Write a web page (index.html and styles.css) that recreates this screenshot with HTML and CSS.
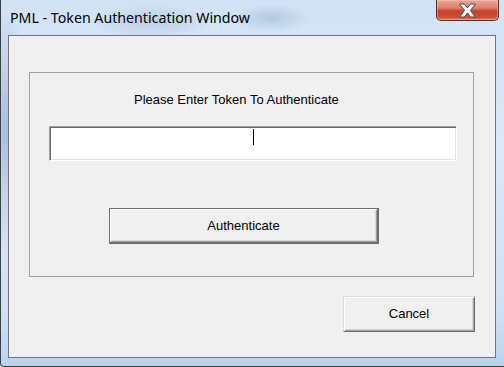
FILE: index.html
```html
<!DOCTYPE html>
<html lang="en">
<head>
    <meta charset="UTF-8">
    <title>PML - Token Authentication Window</title>
    <link rel="stylesheet" href="styles.css">
</head>
<body>
    <div class="window">
        <div class="titlebar">
            <span class="title">PML - Token Authentication Window</span>
            <div class="close-btn">
                <svg width="19" height="15" viewBox="0 0 19 15">
                    <path d="M1.5 1 H6.5 L9.5 5 L12.5 1 H17.5 L12.5 7.5 L17.5 14 H12.5 L9.5 10 L6.5 14 H1.5 L6.5 7.5 Z" fill="#fff" stroke="#404448" stroke-width="1" stroke-linejoin="round"/>
                </svg>
            </div>
        </div>
        <div class="client">
            <div class="group">
                <p class="prompt">Please Enter Token To Authenticate</p>
                <div class="token-box"><span class="caret"></span></div>
                <button class="btn auth-btn">Authenticate</button>
            </div>
            <button class="btn cancel-btn">Cancel</button>
        </div>
    </div>
</body>
</html>
```

FILE: styles.css
```css
body {
    margin: 0;
    background: #fff;
    font-family: "Liberation Sans", Arial, sans-serif;
}
.window {
    width: 504px;
    height: 367px;
    box-sizing: border-box;
    display: flex;
    flex-direction: column;
    padding: 0 8px 8px 7px;
    border-left: 1px solid #3c4148;
    border-bottom: 1px solid #3c4148;
    border-bottom-left-radius: 4px;
    background:
        radial-gradient(ellipse 60px 18px at 150px 22px, rgba(160, 185, 215, 0.45), transparent),
        radial-gradient(ellipse 40px 14px at 270px 18px, rgba(150, 175, 205, 0.5), transparent),
        radial-gradient(ellipse 30px 120px at 4px 130px, rgba(120, 150, 185, 0.5), transparent),
        linear-gradient(to bottom, #d2e2f4 0%, #dbe9f8 40%, #cfe1f4 85%, #b9d3ee 100%);
}
.titlebar {
    height: 35px;
    display: flex;
    justify-content: space-between;
    align-items: flex-start;
}
.title {
    font-family: "Noto Sans", sans-serif;
    font-size: 14.2px;
    color: #000;
    margin: 8px 0 0 2px;
}
.close-btn {
    width: 63px;
    height: 21px;
    margin-right: -3px;
    box-sizing: border-box;
    border: 1px solid #5a2b25;
    border-top: none;
    border-radius: 0 0 5px 5px;
    display: flex;
    align-items: center;
    justify-content: center;
    background: linear-gradient(to bottom, #e9a797 0%, #d9806b 40%, #c4412a 55%, #cd4e33 85%, #e07a58 100%);
    box-shadow: inset 0 0 0 1px rgba(255, 210, 200, 0.45);
}
.close-btn svg {
    display: block;
}
.client {
    flex: 1;
    border: 1px solid #6b7580;
    background: #f0f0f0;
    display: flex;
    flex-direction: column;
    font-size: 13px;
    color: #000;
}
.group {
    width: 445px;
    height: 205px;
    box-sizing: border-box;
    margin: 36px 0 0 20px;
    border: 1px solid #a0a0a0;
    display: flex;
    flex-direction: column;
    align-items: flex-start;
}
.prompt {
    margin: 20px 0 0 104px;
    line-height: 14px;
}
.token-box {
    width: 408px;
    height: 35px;
    box-sizing: border-box;
    margin: 19px 0 0 19px;
    background: #fff;
    border: 1px solid;
    border-color: #a0a0a0 #fff #fff #a0a0a0;
    box-shadow: inset 1px 1px 0 #696969, inset -1px -1px 0 #e3e3e3;
    text-align: center;
    padding-top: 2px;
}
.caret {
    display: inline-block;
    width: 1px;
    height: 16px;
    background: #000;
}
.btn {
    font-family: "Liberation Sans", Arial, sans-serif;
    font-size: 13px;
    color: #000;
    background: #f0f0f0;
    box-sizing: border-box;
    height: 36px;
    padding: 0;
    border: 1px solid #6e6e6e;
    box-shadow: inset 1px 1px 0 #fff, inset -1px -1px 0 #a0a0a0, inset -2px -2px 0 #d8d8d8;
}
.auth-btn {
    width: 270px;
    margin: 47px 0 0 79px;
    border-bottom-width: 2px;
    border-right-width: 2px;
}
.cancel-btn {
    width: 132px;
    margin: 19px 20px 0 0;
    align-self: flex-end;
    border-color: #dcdcdc #6e6e6e #6e6e6e #dcdcdc;
    padding-bottom: 2px;
}
```
